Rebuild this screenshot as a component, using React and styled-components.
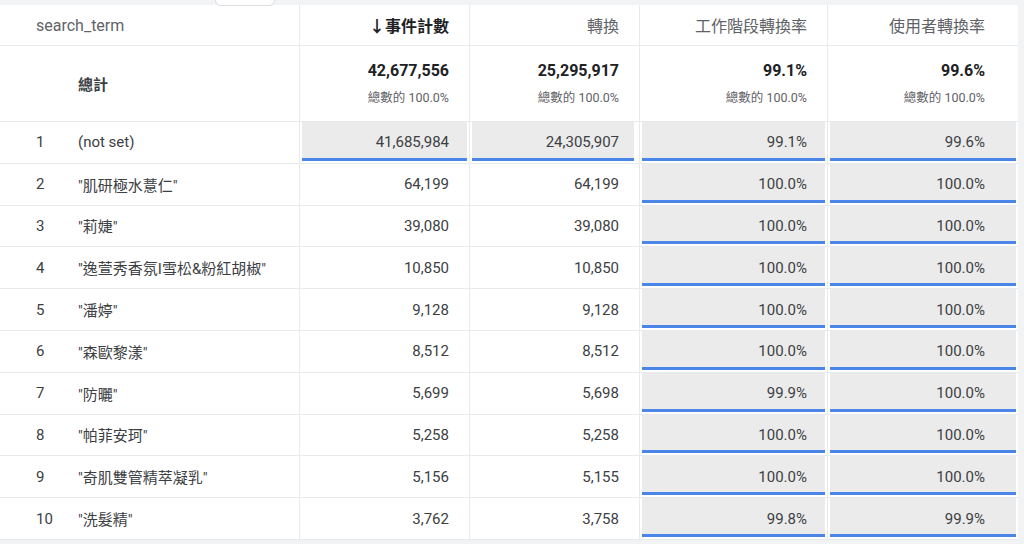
import React from "react";
import styled, { createGlobalStyle } from "styled-components";

const GlobalStyle = createGlobalStyle`
  body {
    margin: 0;
    background: #f1f3f4;
    font-family: Roboto, "Noto Sans CJK TC", sans-serif;
    color: #3c4043;
  }
`;

const Page = styled.div`
  width: 1024px;
  height: 544px;
  padding-top: 5px;
  padding-right: 6px;
  box-sizing: border-box;
  position: relative;
  overflow: hidden;
`;

const Tab = styled.div`
  position: absolute;
  top: -6px;
  left: 215px;
  width: 58px;
  height: 10px;
  border: 1px solid #dadce0;
  border-radius: 6px;
  background: #fff;
`;

const Table = styled.div`
  background: #fff;
  display: grid;
  grid-template-columns: 300px 170px 170px 188px 1fr;
  grid-auto-rows: 41.8px;
  grid-template-rows: 41px 76px;
`;

const Cell = styled.div`
  position: relative;
  display: flex;
  align-items: center;
  justify-content: ${p => (p.$left ? "flex-start" : "flex-end")};
  padding: 0 ${p => (p.$last ? "33px" : "20px")} 0 ${p => (p.$left ? "36px" : "0")};
  border-right: ${p => (p.$last ? "none" : "1px solid #e8eaed")};
  border-bottom: 1px solid #e8eaed;
  font-size: ${p => (p.$head ? "16px" : "15px")};
  box-sizing: border-box;
  color: ${p => (p.$head ? "#5f6368" : "#3c4043")};
  font-weight: ${p => (p.$bold ? 700 : 400)};
`;

const StackCell = styled(Cell)`
  flex-direction: column;
  align-items: flex-end;
  justify-content: center;
  gap: 7px;
`;

const Big = styled.div`
  font-size: 16px;
  font-weight: 700;
  color: #202124;
`;

const Small = styled.div`
  font-size: 12.5px;
  color: #5f6368;
`;

const Num = styled.span`
  width: 42px;
  flex-shrink: 0;
`;

const Fill = styled.div`
  position: absolute;
  left: 2px;
  top: 0;
  bottom: 2px;
  background: #ebebeb;
  border-bottom: 3px solid #4a86e8;
`;

const Val = styled.span`
  position: relative;
`;

const SortHead = styled.span`
  color: #202124;
  font-weight: 700;
  font-size: 16px;
`;

const TOT = [42677556, 25295917];

const rows = [
  ["(not set)", 41685984, 24305907, "99.1%", "99.6%", 99.1, 99.6],
  ['"肌研極水薏仁"', 64199, 64199, "100.0%", "100.0%", 100, 100],
  ['"莉婕"', 39080, 39080, "100.0%", "100.0%", 100, 100],
  ['"逸萱秀香氛I雪松&粉紅胡椒"', 10850, 10850, "100.0%", "100.0%", 100, 100],
  ['"潘婷"', 9128, 9128, "100.0%", "100.0%", 100, 100],
  ['"森歐黎漾"', 8512, 8512, "100.0%", "100.0%", 100, 100],
  ['"防曬"', 5699, 5698, "99.9%", "100.0%", 99.9, 100],
  ['"帕菲安珂"', 5258, 5258, "100.0%", "100.0%", 100, 100],
  ['"奇肌雙管精萃凝乳"', 5156, 5155, "100.0%", "100.0%", 100, 100],
  ['"洗髮精"', 3762, 3758, "99.8%", "99.9%", 99.8, 99.9],
];

const fmt = n => n.toLocaleString("en-US");

function BarCell({ pct, children, last }) {
  const w = pct >= 99 ? "calc(100% - 4px)" : `${pct}%`;
  return (
    <Cell $last={last}>
      {pct > 0.5 && <Fill style={{ width: w }} />}
      <Val>{children}</Val>
    </Cell>
  );
}

export default function App() {
  return (
    <Page>
      <GlobalStyle />
      <Tab />
      <Table>
        <Cell $left $head>search_term</Cell>
        <Cell><SortHead>↓事件計數</SortHead></Cell>
        <Cell $head>轉換</Cell>
        <Cell $head>工作階段轉換率</Cell>
        <Cell $head $last>使用者轉換率</Cell>

        <Cell $left $bold style={{ paddingLeft: 78 }}>總計</Cell>
        <StackCell><Big>42,677,556</Big><Small>總數的 100.0%</Small></StackCell>
        <StackCell><Big>25,295,917</Big><Small>總數的 100.0%</Small></StackCell>
        <StackCell><Big>99.1%</Big><Small>總數的 100.0%</Small></StackCell>
        <StackCell $last><Big>99.6%</Big><Small>總數的 100.0%</Small></StackCell>

        {rows.map((r, i) => (
          <React.Fragment key={i}>
            <Cell $left><Num>{i + 1}</Num>{r[0]}</Cell>
            <BarCell pct={(r[1] / TOT[0]) * 100}>{fmt(r[1])}</BarCell>
            <BarCell pct={(r[2] / TOT[1]) * 100}>{fmt(r[2])}</BarCell>
            <BarCell pct={r[5]}>{r[3]}</BarCell>
            <BarCell pct={r[6]} last>{r[4]}</BarCell>
          </React.Fragment>
        ))}
      </Table>
    </Page>
  );
}
